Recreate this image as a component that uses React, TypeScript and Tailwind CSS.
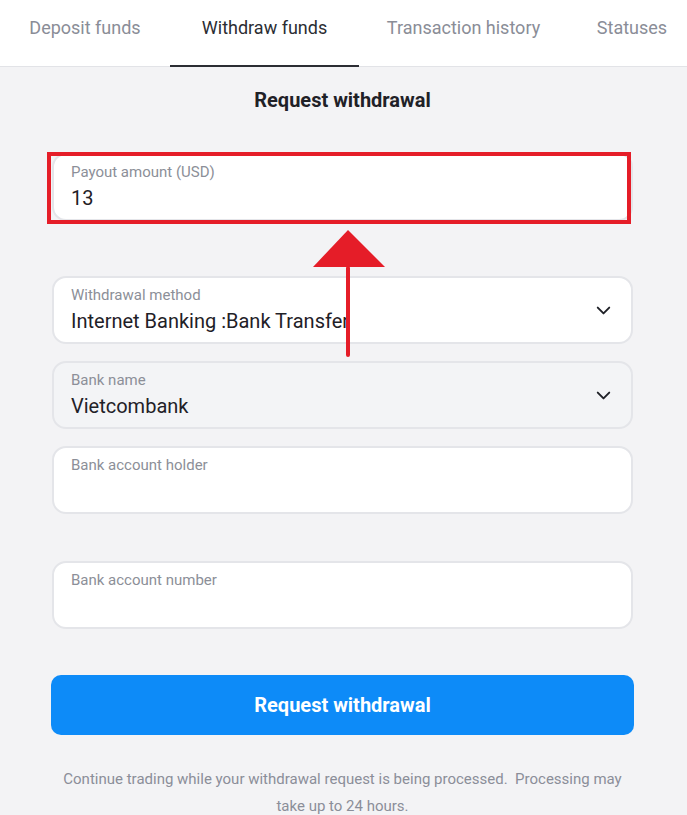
import { ChevronDown } from 'lucide-react';

const tabs = [
  { label: 'Deposit funds', w: 'w-[170px]', active: false },
  { label: 'Withdraw funds', w: 'w-[189px]', active: true },
  { label: 'Transaction history', w: 'w-[209px]', active: false },
  { label: 'Statuses', w: 'w-[128px]', active: false },
];

function Field({
  label,
  value,
  select,
  muted,
  className = '',
}: {
  label: string;
  value?: string;
  select?: boolean;
  muted?: boolean;
  className?: string;
}) {
  return (
    <div
      className={`relative h-[68px] rounded-[14px] border-2 border-[#e4e5e9] px-[17px] pt-[8px] ${
        muted ? 'bg-[#f3f4f6]' : 'bg-white'
      } ${className}`}
    >
      <div className="text-[15px] leading-[19px] text-[#8c8f98]">{label}</div>
      {value && <div className="mt-[4px] text-[20px] leading-[25px] text-[#1f2127]">{value}</div>}
      {select && (
        <ChevronDown
          className="absolute right-[16px] top-[21px] text-[#1f2127]"
          size={23}
          strokeWidth={2}
        />
      )}
    </div>
  );
}

export default function App() {
  return (
    <div
      className="relative h-[815px] w-full overflow-hidden bg-[#f3f3f5]"
      style={{ fontFamily: 'Roboto, "Liberation Sans", sans-serif' }}
    >
      {/* Tabs */}
      <div className="flex h-[67px] border-b border-[#e2e3e7] bg-white">
        {tabs.map((t) => (
          <div
            key={t.label}
            className={`relative shrink-0 ${t.w} pt-[16px] text-center text-[18px] leading-[23px] ${
              t.active ? 'text-[#2b2d33]' : 'text-[#8a8d97]'
            }`}
          >
            {t.label}
            {t.active && <div className="absolute bottom-[-1px] left-0 right-0 h-[2px] bg-[#2b2d33]" />}
          </div>
        ))}
      </div>

      <div className="flex flex-col pl-[52px] pr-[54px]">
        <h2 className="pt-[21px] text-center text-[20px] font-bold leading-[24px] text-[#1f2127]">
          Request withdrawal
        </h2>

        <Field label="Payout amount (USD)" value="13" className="mt-[41px]" />
        <Field label="Withdrawal method" value="Internet Banking :Bank Transfer" select className="mt-[55px]" />
        <Field label="Bank name" value="Vietcombank" select muted className="mt-[17px]" />
        <Field label="Bank account holder" className="mt-[17px]" />
        <Field label="Bank account number" className="mt-[47px]" />

        <button className="mx-[-1px] mt-[46px] h-[60px] rounded-[10px] bg-[#0d8bf8] text-[20px] font-bold text-white">
          Request withdrawal
        </button>

        <p className="mt-[31px] text-center text-[15px] leading-[27px] text-[#8b8e99]">
          Continue trading while your withdrawal request is being processed.&nbsp; Processing may take up to 24
          hours.
        </p>
      </div>

      {/* Annotation overlay */}
      <div className="pointer-events-none absolute left-[47px] top-[152px] h-[72px] w-[584px] border-[4px] border-[#e51d28]" />
      <svg className="pointer-events-none absolute left-0 top-0" width="687" height="815">
        <polygon points="348,230 313,267 385,267" fill="#e51d28" />
        <rect x="346" y="266" width="4" height="91" rx="2" fill="#e51d28" />
      </svg>
    </div>
  );
}
